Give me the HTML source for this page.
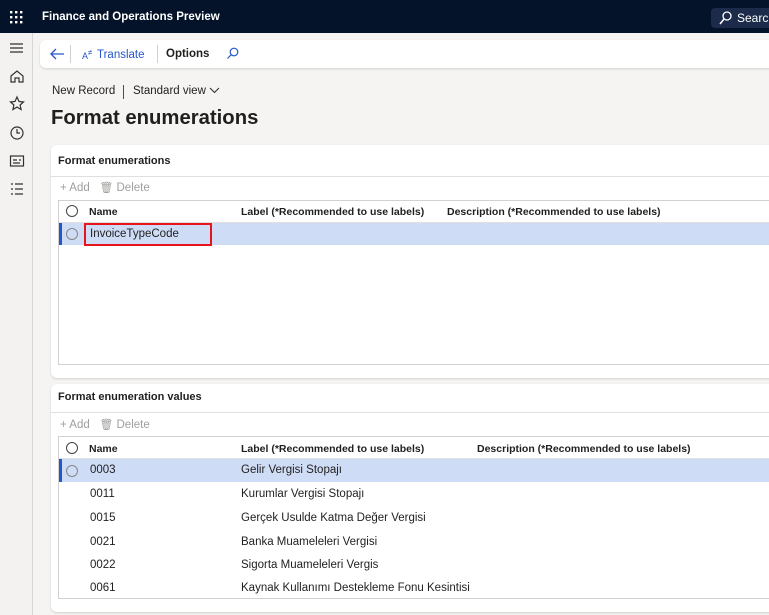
<!DOCTYPE html>
<html><head><style>
*{box-sizing:border-box;margin:0;padding:0}
body{width:769px;height:615px;overflow:hidden;background:#f5f4f2;font-family:"Liberation Sans",sans-serif;font-size:11.5px;color:#201f1e;position:relative}
.a{position:absolute}
.top{left:0;top:0;width:769px;height:33px;background:#041329}
.rail{left:0;top:33px;width:33px;height:582px;background:#f3f2f1;border-right:1px solid #d8d6d4}
.card{background:#fff;border-radius:6px;box-shadow:0 1px 2px rgba(0,0,0,.15)}
.grid{border:1px solid #d1d1d1;background:#fff}
.radio{width:12px;height:12px;border:1.3px solid #444;border-radius:50%}
.radio.g{border-color:#888}
.t{white-space:nowrap}
.hd{font-weight:bold;font-size:10.5px}
.gray{color:#a19f9d}
</style></head><body>
<div class="a top"></div>
<svg class="a" style="left:10px;top:11px" width="13" height="13"><g fill="#fff"><rect x="0" y="0" width="2.4" height="2.4"/><rect x="5" y="0" width="2.4" height="2.4"/><rect x="10" y="0" width="2.4" height="2.4"/><rect x="0" y="5" width="2.4" height="2.4"/><rect x="5" y="5" width="2.4" height="2.4"/><rect x="10" y="5" width="2.4" height="2.4"/><rect x="0" y="10" width="2.4" height="2.4"/><rect x="5" y="10" width="2.4" height="2.4"/><rect x="10" y="10" width="2.4" height="2.4"/></g></svg>
<div class="a t" style="left:42px;top:11px;color:#fff;font-weight:bold;font-size:11.5px">Finance and Operations Preview</div>
<div class="a" style="left:711px;top:8px;width:70px;height:20px;background:#1c2b4a;border-radius:4px"></div>
<svg class="a" style="left:719px;top:11px" width="13" height="14"><circle cx="8" cy="5" r="4" fill="none" stroke="#fff" stroke-width="1.3"/><line x1="5" y1="8" x2="1" y2="13" stroke="#fff" stroke-width="1.5"/></svg>
<div class="a t" style="left:737px;top:11px;color:#fff;font-size:12px">Search</div>

<div class="a rail"></div>
<svg class="a" style="left:9px;top:42px" width="16" height="160" fill="none" stroke="#323130" stroke-width="1.2">
<path d="M1 2h13M1 6h13M1 10h13"/>
<path d="M2 34l6-5 6 5v6h-4v-4h-4v4h-4z"/>
<path d="M8 55l2 4.5 4.5.5-3.4 3 1 4.5-4.1-2.4-4.1 2.4 1-4.5-3.4-3 4.5-.5z"/>
<circle cx="8" cy="91" r="6"/><path d="M8 87v4h3"/>
<rect x="1.5" y="114" width="13" height="10"/><path d="M4 118h4M4 121h7M10 118h2"/>
<path d="M2 142h2M2 147h2M2 152h2M6 142h8M6 147h8M6 152h8"/>
</svg>

<div class="a card" style="left:40px;top:40px;width:740px;height:28px"></div>
<svg class="a" style="left:49px;top:47px" width="16" height="14" fill="none" stroke="#2557c9" stroke-width="1.3"><path d="M15 7H2M7 2L2 7l5 5"/></svg>
<div class="a" style="left:70px;top:45px;width:1px;height:18px;background:#d0d0d0"></div>
<div class="a t" style="left:82px;top:48px;color:#2557c9;font-size:9px">A<sup style="font-size:8px">≠</sup></div>
<div class="a t" style="left:97px;top:49px;color:#2557c9;font-size:11.5px">Translate</div>
<div class="a" style="left:157px;top:45px;width:1px;height:18px;background:#d0d0d0"></div>
<div class="a t" style="left:166px;top:48px;font-weight:bold;font-size:11.5px">Options</div>
<svg class="a" style="left:226px;top:47px" width="13" height="13" fill="none" stroke="#2557c9" stroke-width="1.2"><circle cx="8" cy="5" r="3.8"/><path d="M5.2 7.8L1.5 11.5"/></svg>

<div class="a t" style="left:52px;top:85px;font-size:11.5px">New Record</div>
<div class="a" style="left:123px;top:85px;width:1px;height:14px;background:#a4262c"></div>
<div class="a t" style="left:133px;top:85px;font-size:11.5px">Standard view</div>
<svg class="a" style="left:209px;top:87px" width="11" height="7" fill="none" stroke="#323130" stroke-width="1.1"><path d="M1 1l4.5 4.5L10 1"/></svg>
<div class="a t" style="left:51px;top:107px;font-size:20.3px;font-weight:bold">Format enumerations</div>

<div class="a card" style="left:51px;top:145px;width:730px;height:233px"></div>
<div class="a t hd" style="left:58px;top:155px;font-size:11px">Format enumerations</div>
<div class="a" style="left:51px;top:176px;width:720px;height:1px;background:#e1dfdd"></div>
<div class="a t gray" style="left:60px;top:181px">+ Add &nbsp; <span style="font-size:11px">🗑</span> Delete</div>
<div class="a grid" style="left:58px;top:200px;width:720px;height:165px"></div>
<div class="a radio" style="left:66px;top:205px"></div>
<div class="a t hd" style="left:89px;top:206px">Name</div>
<div class="a t hd" style="left:241px;top:206px">Label (*Recommended to use labels)</div>
<div class="a t hd" style="left:447px;top:206px">Description (*Recommended to use labels)</div>
<div class="a" style="left:59px;top:222px;width:710px;height:1px;background:#e1dfdd"></div>
<div class="a" style="left:59px;top:223px;width:710px;height:22px;background:#cfdcf6"></div>
<div class="a" style="left:59px;top:223px;width:3px;height:22px;background:#2557c9"></div>
<div class="a radio g" style="left:66px;top:228px"></div>
<div class="a" style="left:84px;top:223px;width:128px;height:23px;border:2px solid #e8141d"></div>
<div class="a t" style="left:90px;top:228px">InvoiceTypeCode</div>

<div class="a card" style="left:51px;top:384px;width:730px;height:228px"></div>
<div class="a t hd" style="left:58px;top:391px;font-size:11px">Format enumeration values</div>
<div class="a" style="left:51px;top:412px;width:720px;height:1px;background:#e1dfdd"></div>
<div class="a t gray" style="left:60px;top:418px">+ Add &nbsp; <span style="font-size:11px">🗑</span> Delete</div>
<div class="a grid" style="left:58px;top:436px;width:720px;height:163px"></div>
<div class="a radio" style="left:66px;top:442px"></div>
<div class="a t hd" style="left:89px;top:443px">Name</div>
<div class="a t hd" style="left:241px;top:443px">Label (*Recommended to use labels)</div>
<div class="a t hd" style="left:477px;top:443px">Description (*Recommended to use labels)</div>
<div class="a" style="left:59px;top:458px;width:710px;height:1px;background:#e1dfdd"></div>
<div class="a" style="left:59px;top:459px;width:710px;height:23px;background:#cfdcf6"></div>
<div class="a" style="left:59px;top:459px;width:3px;height:23px;background:#2557c9"></div>
<div class="a radio g" style="left:66px;top:465px"></div>
<div class="a t" style="left:90px;top:464px">0003</div><div class="a t" style="left:241px;top:464px">Gelir Vergisi Stopajı</div>
<div class="a t" style="left:90px;top:488px">0011</div><div class="a t" style="left:241px;top:488px">Kurumlar Vergisi Stopajı</div>
<div class="a t" style="left:90px;top:512px">0015</div><div class="a t" style="left:241px;top:512px">Gerçek Usulde Katma Değer Vergisi</div>
<div class="a t" style="left:90px;top:536px">0021</div><div class="a t" style="left:241px;top:536px">Banka Muameleleri Vergisi</div>
<div class="a t" style="left:90px;top:559px">0022</div><div class="a t" style="left:241px;top:559px">Sigorta Muameleleri Vergis</div>
<div class="a t" style="left:90px;top:582px">0061</div><div class="a t" style="left:241px;top:582px">Kaynak Kullanımı Destekleme Fonu Kesintisi</div>
</body></html>
